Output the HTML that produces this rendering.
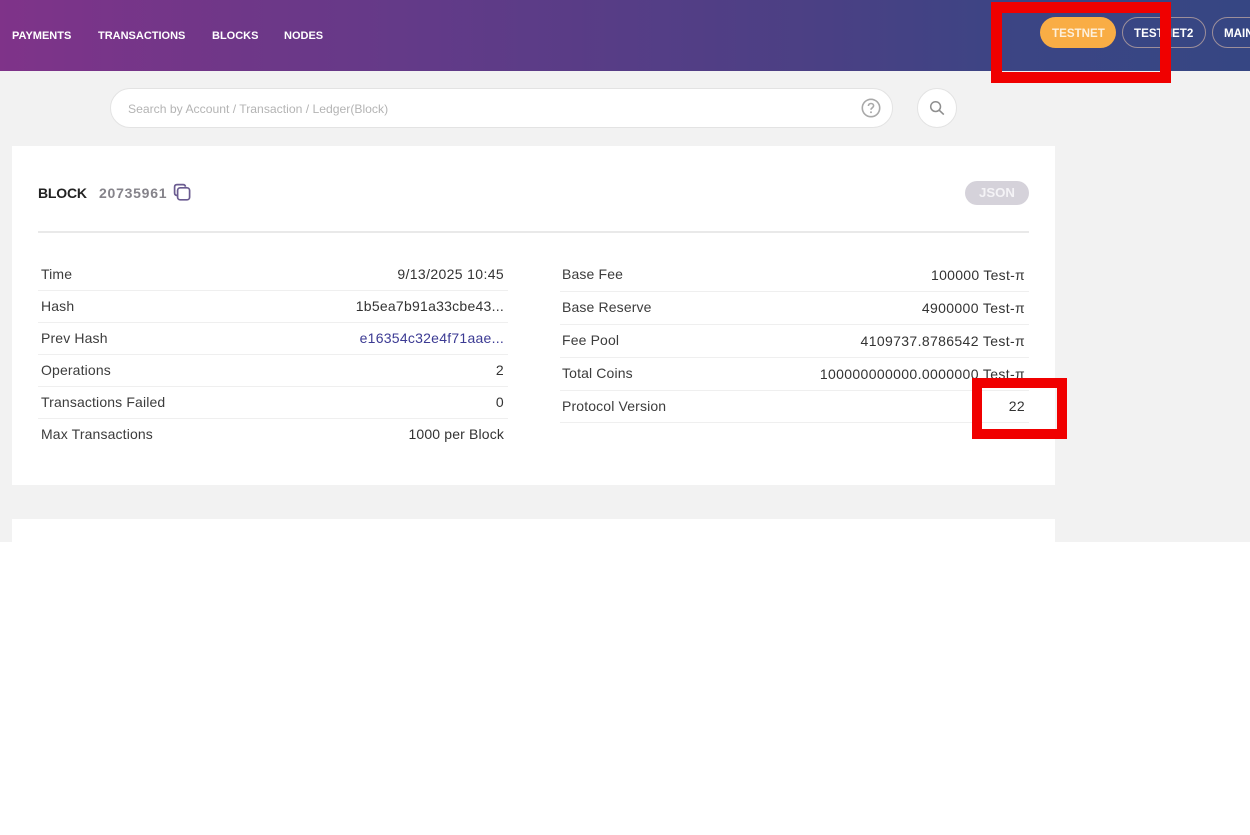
<!DOCTYPE html>
<html lang="en"><head><meta charset="utf-8"><title>Block 20735961</title>
<style>
html,body{margin:0;padding:0;background:#fff}
body{width:1250px;height:835px;position:relative;overflow:hidden;font-family:"Liberation Sans","DejaVu Sans",sans-serif;color:#333}
div,span,svg{position:absolute}
.t{white-space:nowrap;line-height:18px;height:18px;filter:blur(.3px)}
.nav{top:27px;color:#fff;font-size:11px;font-weight:bold;letter-spacing:0}
.l{font-size:14px;color:#3c3c3c;letter-spacing:.14px}
.v{font-size:14px;color:#333;text-align:right;letter-spacing:.36px}
.h{letter-spacing:.25px}
.hr{height:1px;background:#efefef}
.pill{top:17px;height:31px;box-sizing:border-box;border-radius:16px}
.pt{color:#fff;font-size:11.6px;font-weight:bold;line-height:18px;white-space:nowrap;filter:blur(.3px);top:25px}
</style></head><body>
<div style="left:0;top:0;width:1250px;height:542px;background:#f2f2f2"></div>
<div style="left:0;top:0;width:1250px;height:71px;background:linear-gradient(90deg,#7f3389 0%,#633a88 33%,#4a4084 66%,#3b4584 82%,#364683 100%)"></div>

<div class="t nav" style="left:12px">PAYMENTS</div>
<div class="t nav" style="left:98px">TRANSACTIONS</div>
<div class="t nav" style="left:212px">BLOCKS</div>
<div class="t nav" style="left:284px">NODES</div>

<div class="pill" style="left:1040px;width:76px;background:#f9ad45"></div>
<div class="pt" style="left:1052px;color:#fdf0dc">TESTNET</div>
<div class="pill" style="left:1122px;width:84px;border:1px solid #9d8f9a"></div>
<div class="pt" style="left:1134px">TESTNET2</div>
<div class="pill" style="left:1212px;width:76px;border:1px solid #9d8f9a"></div>
<div class="pt" style="left:1224px">MAINNET</div>

<div style="left:110px;top:88px;width:783px;height:40px;box-sizing:border-box;background:#fff;border:1px solid #e3e3e3;border-radius:20px"></div>
<div class="t" style="left:128px;top:101px;font-size:12.17px;color:#b4b4b4;line-height:16px">Search by Account / Transaction / Ledger(Block)</div>
<svg style="left:861px;top:98px" width="20" height="20" viewBox="0 0 20 20" fill="none"><circle cx="10" cy="10" r="8.7" stroke="#a9a9a9" stroke-width="1.6"/><path d="M7.4 8c0-1.6 1.2-2.5 2.6-2.5s2.6.9 2.6 2.3c0 2-2.6 2-2.6 3.9" stroke="#a9a9a9" stroke-width="1.6"/><circle cx="10" cy="14.3" r="1" fill="#a9a9a9"/></svg>
<div style="left:917px;top:88px;width:40px;height:40px;box-sizing:border-box;background:#fff;border:1px solid #e3e3e3;border-radius:50%"></div>
<svg style="left:929px;top:100px" width="16" height="16" viewBox="0 0 16 16" fill="none"><circle cx="6.6" cy="6.6" r="4.9" stroke="#8e8e8e" stroke-width="1.5"/><path d="M10.3 10.3L14.8 14.6" stroke="#8e8e8e" stroke-width="1.6"/></svg>

<div style="left:12px;top:146px;width:1043px;height:339px;background:#fff"></div>
<div style="left:12px;top:519px;width:1043px;height:23px;background:#fff"></div>

<div class="t" style="left:38px;top:184px;font-size:14px;font-weight:bold;color:#222;letter-spacing:-.2px">BLOCK</div>
<div class="t" style="left:99px;top:184px;font-size:14px;font-weight:bold;color:#85838a;letter-spacing:.75px">20735961</div>
<svg style="left:173px;top:183px" width="18" height="18" viewBox="0 0 18 18" fill="none"><path d="M4 12.5C2.4 12.3 1.6 11.4 1.6 10V4C1.6 2.5 2.5 1.6 4 1.6H10C11.4 1.6 12.3 2.4 12.5 3.8" stroke="#6a5b90" stroke-width="1.7"/><rect x="4.6" y="4.8" width="12" height="12" rx="2.6" stroke="#6a5b90" stroke-width="1.7"/></svg>
<div style="left:965px;top:181px;width:64px;height:24px;border-radius:12px;background:#d5d2da"></div>
<div class="t" style="left:965px;top:184px;width:64px;text-align:center;color:#f4f3f6;font-size:13.2px;font-weight:bold">JSON</div>
<div style="left:38px;top:231px;width:991px;height:2px;background:#e9e9e9"></div>

<div class="t l" style="left:41px;top:265px">Time</div><div class="t v" style="left:240px;width:264px;top:265px">9/13/2025 10:45</div>
<div class="hr" style="left:38px;width:470px;top:290px"></div>
<div class="t l" style="left:41px;top:297px">Hash</div><div class="t v h" style="left:240px;width:264px;top:297px">1b5ea7b91a33cbe43...</div>
<div class="hr" style="left:38px;width:470px;top:322px"></div>
<div class="t l" style="left:41px;top:329px">Prev Hash</div><div class="t v h" style="left:240px;width:264px;top:329px;color:#3b3a93">e16354c32e4f71aae...</div>
<div class="hr" style="left:38px;width:470px;top:354px"></div>
<div class="t l" style="left:41px;top:361px">Operations</div><div class="t v" style="left:240px;width:264px;top:361px">2</div>
<div class="hr" style="left:38px;width:470px;top:386px"></div>
<div class="t l" style="left:41px;top:393px">Transactions Failed</div><div class="t v" style="left:240px;width:264px;top:393px">0</div>
<div class="hr" style="left:38px;width:470px;top:418px"></div>
<div class="t l" style="left:41px;top:425px">Max Transactions</div><div class="t v" style="left:240px;width:264px;top:425px;letter-spacing:.15px">1000 per Block</div>

<div class="t l" style="left:562px;top:265px">Base Fee</div><div class="t v" style="left:725px;width:300px;top:266px;letter-spacing:.28px">100000 Test-π</div>
<div class="hr" style="left:560px;width:469px;top:291px"></div>
<div class="t l" style="left:562px;top:298px">Base Reserve</div><div class="t v" style="left:725px;width:300px;top:299px">4900000 Test-π</div>
<div class="hr" style="left:560px;width:469px;top:324px"></div>
<div class="t l" style="left:562px;top:331px">Fee Pool</div><div class="t v" style="left:725px;width:300px;top:332px">4109737.8786542 Test-π</div>
<div class="hr" style="left:560px;width:469px;top:357px"></div>
<div class="t l" style="left:562px;top:364px">Total Coins</div><div class="t v" style="left:725px;width:300px;top:365px">100000000000.0000000 Test-π</div>
<div class="hr" style="left:560px;width:469px;top:390px"></div>
<div class="t l" style="left:562px;top:397px">Protocol Version</div><div class="t v" style="left:725px;width:300px;top:397px">22</div>
<div class="hr" style="left:560px;width:469px;top:422px"></div>

<div style="left:991px;top:2px;width:180px;height:81px;box-sizing:border-box;border:11px solid #f00000"></div>
<div style="left:972px;top:378px;width:95px;height:61px;box-sizing:border-box;border:10px solid #f00000"></div>
</body></html>
